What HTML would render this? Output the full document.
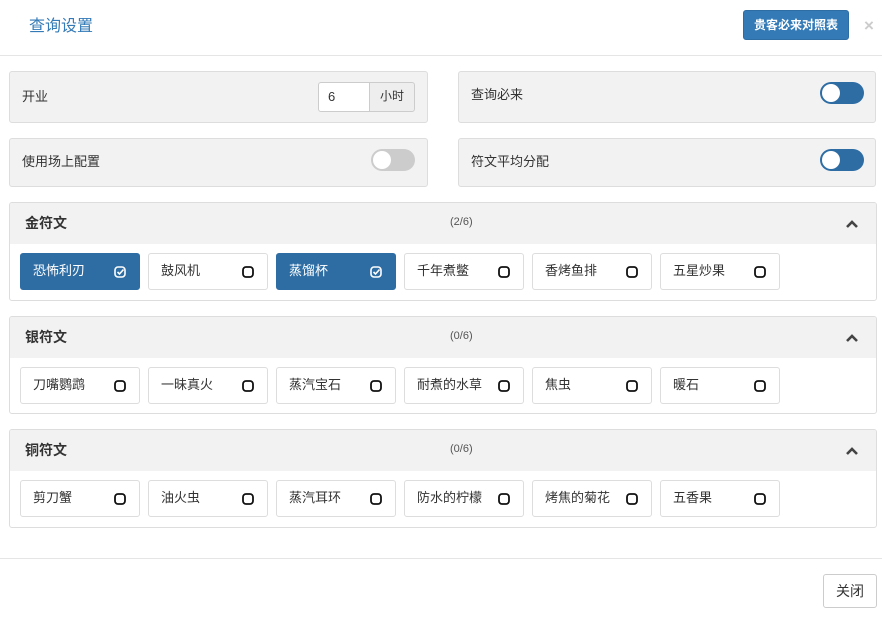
<!DOCTYPE html>
<html><head><meta charset="utf-8"><style>
*{box-sizing:border-box;margin:0;padding:0}
body{width:882px;height:618px;background:#fff;font-family:"Liberation Sans","Noto Sans CJK SC",sans-serif;font-size:13px;color:#333;position:relative;overflow:hidden}
.a{position:absolute}
.box{position:absolute;background:#f2f2f2;border:1px solid #ddd;border-radius:3px}
.lbl{position:absolute;left:12px;font-size:13px}
.tg{position:absolute;width:44px;height:22px;border-radius:11px}
.tg i{position:absolute;top:2px;width:18px;height:18px;border-radius:50%;background:#fff}
.panel{position:absolute;left:9px;width:868px;border:1px solid #ddd;border-radius:3px;overflow:hidden}
.ph{height:41px;background:#f2f2f2;position:relative}
.ph b{position:absolute;left:15px;top:10px;font-size:14px;color:#333}
.ph span{position:absolute;left:440px;top:13px;font-size:11px;color:#555}
.ph svg{position:absolute;right:17px;top:17px}
.it{position:absolute;width:120px;height:37px;border:1px solid #ddd;border-radius:3px;background:#fff;font-size:13px}
.it em{font-style:normal;position:absolute;left:12px;top:6px}
.it.s{background:#2e6da4;border-color:#2e6da4;color:#fff}
.it svg{position:absolute;left:93px;top:12px}
</style></head><body>
<div class="a" style="left:29px;top:12px;font-size:16px;color:#337ab7">查询设置</div>
<div class="a" style="left:743px;top:10px;width:106px;height:30px;background:#337ab7;border:1px solid #2e6da4;border-radius:3px;color:#fff;font-size:12px;text-align:center;line-height:28px;font-weight:bold">贵客必来对照表</div>
<div class="a" style="left:864px;top:16px;font-size:17px;color:#ccc;font-weight:bold">×</div>
<div class="a" style="left:0;top:55px;width:882px;height:1px;background:#e5e5e5"></div>

<div class="box" style="left:9px;top:71px;width:419px;height:52px"><div class="lbl" style="top:14px">开业</div>
<div class="a" style="left:308px;top:10px;width:52px;height:30px;background:#fff;border:1px solid #ccc;border-radius:3px 0 0 3px;padding:6px 9px">6</div>
<div class="a" style="left:359px;top:10px;width:46px;height:30px;background:#eee;border:1px solid #ccc;border-radius:0 3px 3px 0;text-align:center;line-height:26px;font-size:12px">小时</div></div>
<div class="box" style="left:458px;top:71px;width:418px;height:52px"><div class="lbl" style="top:12px">查询必来</div>
<div class="tg" style="left:361px;top:10px;background:#2e6da4"><i style="left:2px"></i></div></div>
<div class="box" style="left:9px;top:138px;width:419px;height:49px"><div class="lbl" style="top:12px">使用场上配置</div>
<div class="tg" style="left:361px;top:10px;background:#ccc"><i style="left:2px"></i></div></div>
<div class="box" style="left:458px;top:138px;width:418px;height:49px"><div class="lbl" style="top:12px">符文平均分配</div>
<div class="tg" style="left:361px;top:10px;background:#2e6da4"><i style="left:2px"></i></div></div>

<div class="panel" style="top:202px;height:99px"><div class="ph"><b>金符文</b><span>(2/6)</span><svg width="14" height="9" viewBox="0 0 14 9"><path d="M2 7L7 2L12 7" stroke="#444" stroke-width="2.6" fill="none"/></svg></div>
<div class="it s" style="left:10px;top:50px"><em>恐怖利刃</em><svg width="12" height="12"><rect x="1" y="1" width="10" height="10" rx="3" fill="none" stroke="#fff" stroke-width="1.6"/><path d="M3.5 6L5.5 8L9.5 3.5" stroke="#fff" stroke-width="1.6" fill="none"/></svg></div>
<div class="it" style="left:138px;top:50px"><em>鼓风机</em><svg width="12" height="12"><rect x="1" y="1" width="10" height="10" rx="3" fill="none" stroke="#111" stroke-width="1.8"/></svg></div>
<div class="it s" style="left:266px;top:50px"><em>蒸馏杯</em><svg width="12" height="12"><rect x="1" y="1" width="10" height="10" rx="3" fill="none" stroke="#fff" stroke-width="1.6"/><path d="M3.5 6L5.5 8L9.5 3.5" stroke="#fff" stroke-width="1.6" fill="none"/></svg></div>
<div class="it" style="left:394px;top:50px"><em>千年煮鳖</em><svg width="12" height="12"><rect x="1" y="1" width="10" height="10" rx="3" fill="none" stroke="#111" stroke-width="1.8"/></svg></div>
<div class="it" style="left:522px;top:50px"><em>香烤鱼排</em><svg width="12" height="12"><rect x="1" y="1" width="10" height="10" rx="3" fill="none" stroke="#111" stroke-width="1.8"/></svg></div>
<div class="it" style="left:650px;top:50px"><em>五星炒果</em><svg width="12" height="12"><rect x="1" y="1" width="10" height="10" rx="3" fill="none" stroke="#111" stroke-width="1.8"/></svg></div>
</div>

<div class="panel" style="top:316px;height:98px"><div class="ph"><b>银符文</b><span>(0/6)</span><svg width="14" height="9" viewBox="0 0 14 9"><path d="M2 7L7 2L12 7" stroke="#444" stroke-width="2.6" fill="none"/></svg></div>
<div class="it" style="left:10px;top:50px"><em>刀嘴鹦鹉</em><svg width="12" height="12"><rect x="1" y="1" width="10" height="10" rx="3" fill="none" stroke="#111" stroke-width="1.8"/></svg></div>
<div class="it" style="left:138px;top:50px"><em>一昧真火</em><svg width="12" height="12"><rect x="1" y="1" width="10" height="10" rx="3" fill="none" stroke="#111" stroke-width="1.8"/></svg></div>
<div class="it" style="left:266px;top:50px"><em>蒸汽宝石</em><svg width="12" height="12"><rect x="1" y="1" width="10" height="10" rx="3" fill="none" stroke="#111" stroke-width="1.8"/></svg></div>
<div class="it" style="left:394px;top:50px"><em>耐煮的水草</em><svg width="12" height="12"><rect x="1" y="1" width="10" height="10" rx="3" fill="none" stroke="#111" stroke-width="1.8"/></svg></div>
<div class="it" style="left:522px;top:50px"><em>焦虫</em><svg width="12" height="12"><rect x="1" y="1" width="10" height="10" rx="3" fill="none" stroke="#111" stroke-width="1.8"/></svg></div>
<div class="it" style="left:650px;top:50px"><em>暖石</em><svg width="12" height="12"><rect x="1" y="1" width="10" height="10" rx="3" fill="none" stroke="#111" stroke-width="1.8"/></svg></div>
</div>

<div class="panel" style="top:429px;height:99px"><div class="ph"><b>铜符文</b><span>(0/6)</span><svg width="14" height="9" viewBox="0 0 14 9"><path d="M2 7L7 2L12 7" stroke="#444" stroke-width="2.6" fill="none"/></svg></div>
<div class="it" style="left:10px;top:50px"><em>剪刀蟹</em><svg width="12" height="12"><rect x="1" y="1" width="10" height="10" rx="3" fill="none" stroke="#111" stroke-width="1.8"/></svg></div>
<div class="it" style="left:138px;top:50px"><em>油火虫</em><svg width="12" height="12"><rect x="1" y="1" width="10" height="10" rx="3" fill="none" stroke="#111" stroke-width="1.8"/></svg></div>
<div class="it" style="left:266px;top:50px"><em>蒸汽耳环</em><svg width="12" height="12"><rect x="1" y="1" width="10" height="10" rx="3" fill="none" stroke="#111" stroke-width="1.8"/></svg></div>
<div class="it" style="left:394px;top:50px"><em>防水的柠檬</em><svg width="12" height="12"><rect x="1" y="1" width="10" height="10" rx="3" fill="none" stroke="#111" stroke-width="1.8"/></svg></div>
<div class="it" style="left:522px;top:50px"><em>烤焦的菊花</em><svg width="12" height="12"><rect x="1" y="1" width="10" height="10" rx="3" fill="none" stroke="#111" stroke-width="1.8"/></svg></div>
<div class="it" style="left:650px;top:50px"><em>五香果</em><svg width="12" height="12"><rect x="1" y="1" width="10" height="10" rx="3" fill="none" stroke="#111" stroke-width="1.8"/></svg></div>
</div>

<div class="a" style="left:0;top:558px;width:882px;height:1px;background:#e5e5e5"></div>
<div class="a" style="left:823px;top:574px;width:54px;height:34px;border:1px solid #ccc;border-radius:3px;text-align:center;line-height:32px;font-size:14px">关闭</div>
</body></html>
